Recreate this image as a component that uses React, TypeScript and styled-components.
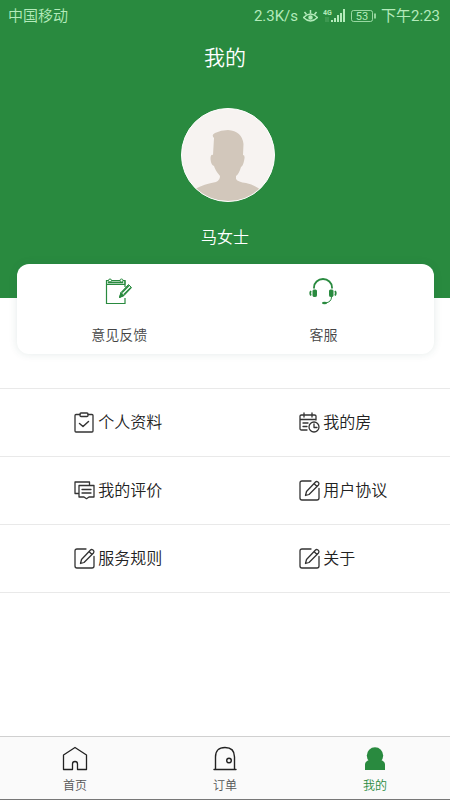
import React from "react";
import styled, { createGlobalStyle } from "styled-components";

const green = "#298a3f";

const GlobalStyle = createGlobalStyle`
  * { box-sizing: border-box; }
  body {
    margin: 0;
    background: #fff;
    color: #333;
    font-family: Roboto, "Noto Sans CJK SC", sans-serif;
    font-weight: 350;
  }
  button { font: inherit; color: inherit; border: 0; padding: 0; background: none; cursor: pointer; }
  a { color: inherit; text-decoration: none; }
  svg { display: block; flex: none; }
`;

const Page = styled.div`
  min-height: 100vh;
  display: flex;
  flex-direction: column;
`;

const Header = styled.header`
  background: ${green};
  color: #fff;
  padding-bottom: 48px;
  display: flex;
  flex-direction: column;
  align-items: center;
`;

const StatusBar = styled.div`
  align-self: stretch;
  height: 32px;
  padding: 0 10px 0 8px;
  display: flex;
  align-items: center;
  justify-content: space-between;
  color: #b4ebbb;
  font-size: 15px;
  font-weight: 400;
  line-height: 20px;
`;

const Carrier = styled.span`
  font-weight: 350;
`;

const StatusGroup = styled.div`
  display: flex;
  align-items: center;
  gap: 5px;
`;

const Title = styled.h1`
  margin: 10px 0 0;
  font-size: 21px;
  line-height: 32px;
  font-weight: 350;
`;

const Avatar = styled.div`
  margin: 34px 0 0 5px;
  width: 94px;
  height: 94px;
  border-radius: 50%;
  border: 1px solid #fff;
  background: #f7f3f1;
  overflow: hidden;
`;

const UserName = styled.div`
  margin-top: 24px;
  font-size: 16px;
  line-height: 24px;
`;

const Card = styled.section`
  margin: -34px 16px 0 17px;
  height: 90px;
  border-radius: 12px;
  background: #fff;
  box-shadow: 0 0 8px rgba(30, 80, 70, 0.12);
  display: grid;
  grid-template-columns: 49% 49%;
`;

const CardButton = styled.button`
  display: flex;
  flex-direction: column;
  align-items: center;
  justify-content: flex-start;
  padding-top: 13px;
  gap: 20px;
  font-size: 14px;
  line-height: 20px;
  color: #444;
`;

const Menu = styled.nav`
  margin-top: 34px;
  border-top: 1px solid #e9e9e9;
`;

const MenuRow = styled.div`
  display: grid;
  grid-template-columns: 1fr 1fr;
  height: 68px;
  border-bottom: 1px solid #e9e9e9;
`;

const MenuLink = styled.a`
  display: flex;
  align-items: center;
  gap: 3px;
  padding-left: 33%;
  font-size: 16px;
  line-height: 24px;
  color: #222;
  white-space: nowrap;
`;

const TabBar = styled.nav`
  margin-top: auto;
  height: 64px;
  background: #fafafa;
  border-top: 1px solid #d0d0d0;
  border-bottom: 1px solid #777;
  display: grid;
  grid-template-columns: repeat(3, 1fr);
`;

const Tab = styled.a<{ $active?: boolean }>`
  display: flex;
  flex-direction: column;
  align-items: center;
  padding-top: 9px;
  gap: 5px;
  font-size: 12px;
  line-height: 18px;
  color: ${(p) => (p.$active ? green : "#555")};
`;

const EyeIcon = () => (
  <svg width="15" height="14" viewBox="0 0 15 14" fill="none" stroke="currentColor" strokeWidth="1.500">
    <path d="M.5 8.500Q7.500 1.500 14.500 8.500Q7.500 15.500.5 8.500Z" />
    <circle cx="7.500" cy="8.500" r="1.500" fill="currentColor" />
    <path d="M1.500 3l2 2.500M7.500 1v3.500M13.500 3l-2 2.500" />
  </svg>
);

const SignalIcon = () => (
  <svg width="23" height="16" viewBox="0 0 23 16" fill="currentColor">
    <text x="0" y="7" fontSize="7" fontWeight="700">4G</text>
    <path d="M8 12h2v2H8zM11 10h2v4h-2zM14 7h2v7h-2zM17 5h2v9h-2zM20 1h2v13h-2z" />
    <path d="M3 9v5M5 9v5" stroke="currentColor" strokeOpacity=".3" />
  </svg>
);

const BatteryIcon = () => (
  <svg width="25" height="14" viewBox="0 0 25 14" fill="none" stroke="currentColor">
    <rect x=".5" y="1.500" width="21" height="11" rx="2" strokeOpacity=".8" />
    <path d="M24 4.500v5" strokeWidth="1.500" />
    <text x="11" y="11" textAnchor="middle" fontSize="11" fill="currentColor" stroke="none">53</text>
  </svg>
);

const AvatarPicture = () => (
  <svg width="92" height="92" viewBox="0 0 92 92" fill="#d2c7bb">
    <path d="M32 29Q29 26 33 24Q39 21 46 21Q60 22 61.500 35L61 46Q63.500 46 62 52Q61 57 59 58Q57 65 54 67V70Q56 73 64 74Q73 76 79 81Q65 92 46 92Q27 92 13 80Q22 75 34 73Q38 71 38 67Q33 61 32 57Q29 56 28.500 50Q28.500 45 31 46Z" />
  </svg>
);

const FeedbackIcon = () => (
  <svg width="28" height="28" viewBox="0 0 28 28" fill="none" stroke={green}>
    <path d="M20 21v5.500H1.500v-23H20V10" strokeWidth="1.200" />
    <path d="M1.500 3.500H20v4H1.500z" fill={green} fillOpacity=".25" />
    <path d="M3 5.500h15" strokeWidth="1.500" />
    <circle cx="5" cy="3.500" r="1.500" fill="#fff" />
    <circle cx="16.500" cy="3.500" r="1.500" fill="#fff" />
    <path d="M14.500 20.500l1.500-5L23.500 7.500l3 3L19 18.500z" fill="#fff" />
    <path d="M17 15.500L24 8.500M19 17.500L26 10.500" strokeWidth="1.600" />
    <path d="M16 15.500l3 3-4.500 2z" fill={green} />
  </svg>
);

const HeadsetIcon = () => (
  <svg width="28" height="28" viewBox="0 0 28 28" fill="none" stroke={green}>
    <path d="M5 11.500V10.500a9 8.500 0 0118 0v1" strokeWidth="1.800" />
    <rect x="4" y="13" width="3.500" height="6.500" rx=".8" fill={green} />
    <rect x="20.500" y="13" width="3.500" height="6.500" rx=".8" fill={green} />
    <path d="M2 14q-1.500 2 0 4.500M26 14q1.500 2 0 4.500" strokeWidth="1.800" />
    <path d="M22.500 20q0 5-6 6" />
    <ellipse cx="15.500" cy="26" rx="2.500" ry="1.300" fill={green} stroke="none" />
  </svg>
);

const Line = ({ children }: { children: React.ReactNode }) => (
  <svg width="21" height="21" viewBox="0 0 21 21" fill="none" stroke="#333" strokeWidth="1.300" strokeLinecap="round" strokeLinejoin="round">
    {children}
  </svg>
);

const ProfileIcon = () => (
  <Line>
    <path d="M6 2.500H2Q1 2.500 1 3.500v15.500Q1 20 2 20h16Q19 20 19 19V3.500Q19 2.500 18 2.500H14" />
    <rect x="6" y="1" width="8" height="3.500" rx="1" />
    <path d="M5.500 11.500L9 14.500l5.500-5" strokeWidth="1.500" />
  </Line>
);

const HouseDateIcon = () => (
  <Line>
    <path d="M8 18H2.500Q1 18 1 16.500V4Q1 3 2.500 3h13Q17 3 17 4v4M1 7.500h16M5 1v4M13 1v4M4 11h5M4 14.500h4" />
    <circle cx="15" cy="15" r="5" />
    <path d="M15 12v3.500h3" />
  </Line>
);

const ReviewIcon = () => (
  <Line>
    <path d="M15.500 4.500V2H1v11.500h3.500M5 5.500h15v11.500h-5l-2.500 1.700L10 17H5zM8 9.500h9M8 13h9" />
  </Line>
);

const EditIcon = () => (
  <Line>
    <path d="M12 1H3Q1 1 1 3v15q0 2 2 2h15Q20 20 20 18V8.500" />
    <path d="M7.500 11.500L16.500 2q1-1 2.500 0t.5 3L10 14.500 6.500 15.500zM15 3.500l3 3" />
  </Line>
);

const HomeIcon = () => (
  <svg width="26" height="26" viewBox="0 0 26 26" fill="none" stroke="#222" strokeWidth="1.300" strokeLinejoin="round">
    <path d="M1.500 9L13 1.500 24.500 9v14.500H15.500V18q0-2.500-2.500-2.500T10.500 18v5.500H1.500z" />
  </svg>
);

const DoorIcon = () => (
  <svg width="26" height="26" viewBox="0 0 26 26" fill="none" stroke="#222" strokeWidth="1.400" strokeLinecap="round">
    <path d="M3.500 23.500V11q0-9.500 9.500-9.500T22.500 11v12.500M2 23.500h22" />
    <circle cx="17" cy="14.500" r="2.300" />
  </svg>
);

const PersonIcon = () => (
  <svg width="26" height="26" viewBox="0 0 26 26" fill={green}>
    <circle cx="13" cy="9.500" r="8.200" />
    <path d="M7 14h12q4 1.500 4 4.500V24H3v-5.500Q3 15.500 7 14z" />
  </svg>
);

const menuRows = [
  [
    { label: "个人资料", Icon: ProfileIcon },
    { label: "我的房", Icon: HouseDateIcon },
  ],
  [
    { label: "我的评价", Icon: ReviewIcon },
    { label: "用户协议", Icon: EditIcon },
  ],
  [
    { label: "服务规则", Icon: EditIcon },
    { label: "关于", Icon: EditIcon },
  ],
];

export default function App() {
  return (
    <Page>
      <GlobalStyle />
      <Header>
        <StatusBar>
          <Carrier>中国移动</Carrier>
          <StatusGroup>
            <span>2.3K/s</span>
            <EyeIcon />
            <SignalIcon />
            <BatteryIcon />
            <span>下午2:23</span>
          </StatusGroup>
        </StatusBar>
        <Title>我的</Title>
        <Avatar><AvatarPicture /></Avatar>
        <UserName>马女士</UserName>
      </Header>
      <Card>
        <CardButton type="button"><FeedbackIcon />意见反馈</CardButton>
        <CardButton type="button"><HeadsetIcon />客服</CardButton>
      </Card>
      <Menu>
        {menuRows.map((row) => (
          <MenuRow key={row[0].label}>
            {row.map(({ label, Icon }) => (
              <MenuLink href="#" key={label}><Icon />{label}</MenuLink>
            ))}
          </MenuRow>
        ))}
      </Menu>
      <TabBar>
        <Tab href="#"><HomeIcon />首页</Tab>
        <Tab href="#"><DoorIcon />订单</Tab>
        <Tab href="#" $active aria-current="page"><PersonIcon />我的</Tab>
      </TabBar>
    </Page>
  );
}
